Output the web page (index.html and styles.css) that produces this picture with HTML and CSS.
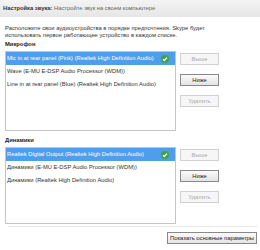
FILE: index.html
```html
<!DOCTYPE html>
<html>
<head>
<meta charset="utf-8">
<link rel="stylesheet" href="styles.css">
</head>
<body>
<div class="header"><b>Настройка звука:</b> <span class="sub">Настройте звук на своем компьютере</span></div>
<div class="content">
  <p class="intro">Расположите свои аудиоустройства в порядке предпочтения. Skype будет использовать первое работающее устройство в каждом списке.</p>
  <div class="label">Микрофон</div>
  <div class="row">
    <div class="list">
      <div class="item sel"><span>Mic in at rear panel (Pink) (Realtek High Definition Audio)</span><span class="ok"><svg width="8" height="8" viewBox="0 0 8 8"><circle cx="4" cy="4" r="4" fill="#3aa53a"/><path d="M2 4.2 L3.4 5.5 L6 2.6" stroke="#fff" stroke-width="1.3" fill="none"/></svg></span></div>
      <div class="item">Wave (E-MU E-DSP Audio Processor (WDM))</div>
      <div class="item">Line in at rear panel (Blue) (Realtek High Definition Audio)</div>
    </div>
    <div class="btns">
      <div class="btn dis">Выше</div>
      <div class="btn">Ниже</div>
      <div class="btn dis">Удалить</div>
    </div>
  </div>
  <div class="label l2">Динамики</div>
  <div class="row">
    <div class="list list2">
      <div class="item sel"><span>Realtek Digital Output (Realtek High Definition Audio)</span><span class="ok"><svg width="8" height="8" viewBox="0 0 8 8"><circle cx="4" cy="4" r="4" fill="#3aa53a"/><path d="M2 4.2 L3.4 5.5 L6 2.6" stroke="#fff" stroke-width="1.3" fill="none"/></svg></span></div>
      <div class="item">Динамики (E-MU E-DSP Audio Processor (WDM))</div>
      <div class="item">Динамики (Realtek High Definition Audio)</div>
    </div>
    <div class="btns">
      <div class="btn dis">Выше</div>
      <div class="btn">Ниже</div>
      <div class="btn dis">Удалить</div>
    </div>
  </div>
</div>
<div class="sep"></div>
<div class="footer"><div class="btn wide">Показать основные параметры</div></div>
</body>
</html>
```
FILE: styles.css
```css
html, body { margin: 0; padding: 0; background: #fff; }
body { font-family: "Liberation Sans", "DejaVu Sans", sans-serif; font-size: 5.8px; color: #333; width: 260px; height: 250px; overflow: hidden; }
.header { height: 17px; line-height: 17px; padding-left: 3px; background: linear-gradient(#f4f4f4, #e6e6e6); color: #222; }
.header b { font-weight: bold; color: #333; }
.header .sub { color: #666; }
.content { padding: 0 5px; }
.intro { margin: 8px 0 0 0; line-height: 6.5px; color: #333; max-width: 208px; }
.label { font-weight: bold; margin-top: 3px; line-height: 7px; color: #222; }
.l2 { margin-top: 6px; }
.row { display: flex; margin-top: 3px; }
.list { width: 169px; height: 78px; border: 1px solid #c4c4c4; }
.list2 { height: 75px; }
.item { height: 13px; line-height: 13px; padding-left: 1px; display: flex; justify-content: space-between; align-items: center; white-space: nowrap; color: #333; }
.item.sel { background: #4f9eec; color: #fff; }
.ok { display: flex; margin-right: 6px; }
.btns { margin-left: 4px; display: flex; flex-direction: column; gap: 9px; padding-top: 2px; }
.btn { width: 37px; height: 10px; line-height: 10px; text-align: center; border: 1px solid #888; background: linear-gradient(#fbfbfb, #e4e4e4); color: #222; }
.btn.dis { border-color: #d2d2d2; color: #aaa; background: #f6f6f6; }
.sep { margin: 2px 3px 0 8px; border-top: 1px solid #e6e6e6; }
.footer { display: flex; justify-content: flex-end; padding: 5px 3px 0 0; }
.btn.wide { width: auto; padding: 0 2px; height: 10px; }
```
